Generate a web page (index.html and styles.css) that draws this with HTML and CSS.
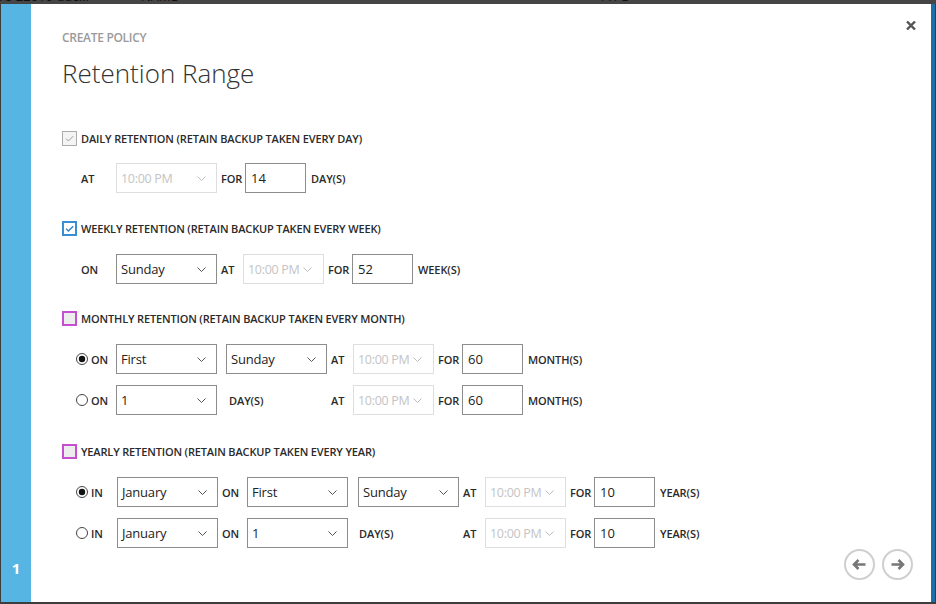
FILE: index.html
```html
<!DOCTYPE html>
<html lang="en">
<head>
<meta charset="utf-8">
<title>Create Policy - Retention Range</title>
<link rel="stylesheet" href="styles.css">
</head>
<body>
<div class="topbar">
  <span class="tb tb-1">re-22010-bac...</span>
  <span class="tb tb-2">NAME</span>
  <span class="tb tb-3">TYPE</span>
</div>
<div class="frame">
  <aside class="steps"><span class="step">1</span></aside>
  <main class="dialog">
    <button class="close" aria-label="Close">
      <svg width="10" height="9" viewBox="0 0 10 9"><path d="M1 0.5L9 8.5M9 0.5L1 8.5" stroke="#555" stroke-width="2.4" fill="none"/></svg>
    </button>
    <div class="kicker">CREATE POLICY</div>
    <h1 class="title">Retention Range</h1>

    <section class="sec sec-daily">
      <div class="head">
        <svg class="cb" viewBox="0 0 15 15"><rect x="0.5" y="0.5" width="14" height="14" fill="#f4f4f4" stroke="#ababab"/><path d="M4 7.6l2.4 2.4 4.8-4.8" fill="none" stroke="#9c9c9c" stroke-width="1"/></svg>
        <span>DAILY RETENTION (RETAIN BACKUP TAKEN EVERY DAY)</span>
      </div>
      <div class="row">
        <div class="lead"><span class="lbl">AT</span></div>
        <div class="sel dis"><span>10:00 PM</span><svg class="chev" viewBox="0 0 9 5"><path d="M0.5 0.5L4.5 4.5L8.5 0.5"/></svg></div>
        <span class="lbl l-for">FOR</span>
        <div class="inp">14</div>
        <span class="lbl unit">DAY(S)</span>
      </div>
    </section>

    <section class="sec sec-weekly">
      <div class="head">
        <svg class="cb" viewBox="0 0 15 15"><rect x="1" y="1" width="13" height="13" fill="#fff" stroke="#3b8ed2" stroke-width="2"/><path d="M4 7.6l2.4 2.4 4.8-4.8" fill="none" stroke="#2a7cc3" stroke-width="1.3"/></svg>
        <span>WEEKLY RETENTION (RETAIN BACKUP TAKEN EVERY WEEK)</span>
      </div>
      <div class="row">
        <div class="lead"><span class="lbl">ON</span></div>
        <div class="sel"><span>Sunday</span><svg class="chev" viewBox="0 0 9 5"><path d="M0.5 0.5L4.5 4.5L8.5 0.5"/></svg></div>
        <span class="lbl l-at">AT</span>
        <div class="sel sm dis"><span>10:00 PM</span><svg class="chev" viewBox="0 0 9 5"><path d="M0.5 0.5L4.5 4.5L8.5 0.5"/></svg></div>
        <span class="lbl l-for">FOR</span>
        <div class="inp">52</div>
        <span class="lbl unit">WEEK(S)</span>
      </div>
    </section>

    <section class="sec sec-monthly">
      <div class="head">
        <svg class="cb" viewBox="0 0 15 15"><rect x="1" y="1" width="13" height="13" fill="#ededed" stroke="#c64ed1" stroke-width="2"/></svg>
        <span>MONTHLY RETENTION (RETAIN BACKUP TAKEN EVERY MONTH)</span>
      </div>
      <div class="row">
        <div class="lead radio-lead">
          <svg class="radio" viewBox="0 0 12 12"><circle cx="6" cy="6" r="5.5" fill="#fff" stroke="#444"/><circle cx="6" cy="6" r="3.2" fill="#111"/></svg>
          <span class="lbl">ON</span>
        </div>
        <div class="sel"><span>First</span><svg class="chev" viewBox="0 0 9 5"><path d="M0.5 0.5L4.5 4.5L8.5 0.5"/></svg></div>
        <div class="sel gap9"><span>Sunday</span><svg class="chev" viewBox="0 0 9 5"><path d="M0.5 0.5L4.5 4.5L8.5 0.5"/></svg></div>
        <span class="lbl l-at">AT</span>
        <div class="sel sm dis"><span>10:00 PM</span><svg class="chev" viewBox="0 0 9 5"><path d="M0.5 0.5L4.5 4.5L8.5 0.5"/></svg></div>
        <span class="lbl l-for">FOR</span>
        <div class="inp">60</div>
        <span class="lbl unit">MONTH(S)</span>
      </div>
      <div class="row">
        <div class="lead radio-lead">
          <svg class="radio" viewBox="0 0 12 12"><circle cx="6" cy="6" r="5.5" fill="#fff" stroke="#444"/></svg>
          <span class="lbl">ON</span>
        </div>
        <div class="sel"><span>1</span><svg class="chev" viewBox="0 0 9 5"><path d="M0.5 0.5L4.5 4.5L8.5 0.5"/></svg></div>
        <span class="lbl l-days">DAY(S)</span>
        <span class="lbl l-at">AT</span>
        <div class="sel sm dis"><span>10:00 PM</span><svg class="chev" viewBox="0 0 9 5"><path d="M0.5 0.5L4.5 4.5L8.5 0.5"/></svg></div>
        <span class="lbl l-for">FOR</span>
        <div class="inp">60</div>
        <span class="lbl unit">MONTH(S)</span>
      </div>
    </section>

    <section class="sec sec-yearly">
      <div class="head">
        <svg class="cb" viewBox="0 0 15 15"><rect x="1" y="1" width="13" height="13" fill="#ededed" stroke="#c64ed1" stroke-width="2"/></svg>
        <span>YEARLY RETENTION (RETAIN BACKUP TAKEN EVERY YEAR)</span>
      </div>
      <div class="row">
        <div class="lead radio-lead wide">
          <svg class="radio" viewBox="0 0 12 12"><circle cx="6" cy="6" r="5.5" fill="#fff" stroke="#444"/><circle cx="6" cy="6" r="3.2" fill="#111"/></svg>
          <span class="lbl">IN</span>
        </div>
        <div class="sel"><span>January</span><svg class="chev" viewBox="0 0 9 5"><path d="M0.5 0.5L4.5 4.5L8.5 0.5"/></svg></div>
        <span class="lbl l-on">ON</span>
        <div class="sel"><span>First</span><svg class="chev" viewBox="0 0 9 5"><path d="M0.5 0.5L4.5 4.5L8.5 0.5"/></svg></div>
        <div class="sel gap10"><span>Sunday</span><svg class="chev" viewBox="0 0 9 5"><path d="M0.5 0.5L4.5 4.5L8.5 0.5"/></svg></div>
        <span class="lbl l-at">AT</span>
        <div class="sel sm dis"><span>10:00 PM</span><svg class="chev" viewBox="0 0 9 5"><path d="M0.5 0.5L4.5 4.5L8.5 0.5"/></svg></div>
        <span class="lbl l-for">FOR</span>
        <div class="inp">10</div>
        <span class="lbl unit">YEAR(S)</span>
      </div>
      <div class="row">
        <div class="lead radio-lead wide">
          <svg class="radio" viewBox="0 0 12 12"><circle cx="6" cy="6" r="5.5" fill="#fff" stroke="#444"/></svg>
          <span class="lbl">IN</span>
        </div>
        <div class="sel"><span>January</span><svg class="chev" viewBox="0 0 9 5"><path d="M0.5 0.5L4.5 4.5L8.5 0.5"/></svg></div>
        <span class="lbl l-on">ON</span>
        <div class="sel"><span>1</span><svg class="chev" viewBox="0 0 9 5"><path d="M0.5 0.5L4.5 4.5L8.5 0.5"/></svg></div>
        <span class="lbl l-days y">DAY(S)</span>
        <span class="lbl l-at">AT</span>
        <div class="sel sm dis"><span>10:00 PM</span><svg class="chev" viewBox="0 0 9 5"><path d="M0.5 0.5L4.5 4.5L8.5 0.5"/></svg></div>
        <span class="lbl l-for">FOR</span>
        <div class="inp">10</div>
        <span class="lbl unit">YEAR(S)</span>
      </div>
    </section>

    <nav class="nav">
      <button class="navbtn" aria-label="Back">
        <svg width="31" height="31" viewBox="0 0 31 31"><circle cx="15.5" cy="15.5" r="14.5" fill="#fff" stroke="#cfcfcf" stroke-width="2"/><path d="M21.5 15.5H10M14.5 11L10 15.5L14.5 20" fill="none" stroke="#777" stroke-width="2.6"/></svg>
      </button>
      <button class="navbtn" aria-label="Next">
        <svg width="31" height="31" viewBox="0 0 31 31"><circle cx="15.5" cy="15.5" r="14.5" fill="#fff" stroke="#cfcfcf" stroke-width="2"/><path d="M9.5 15.5H21M16.5 11L21 15.5L16.5 20" fill="none" stroke="#777" stroke-width="2.6"/></svg>
      </button>
    </nav>
  </main>
  <div class="edge"></div>
</div>
</body>
</html>
```

FILE: styles.css
```css
* { box-sizing: border-box; margin: 0; padding: 0; }
html, body { width: 936px; height: 604px; overflow: hidden; }
body {
  background: #3d3d3d;
  font-family: "Open Sans", "Noto Sans", sans-serif;
  color: #2a2a2a;
  display: flex;
  flex-direction: column;
}
.topbar {
  height: 4px;
  flex: none;
  overflow: hidden;
  display: flex;
  background: #454545;
}
.tb {
  font-size: 13px;
  line-height: 13px;
  margin-top: -10px;
  color: #111;
  white-space: nowrap;
}
.tb-1 { width: 142px; margin-left: -1px; }
.tb-2 { width: 458px; }
.frame {
  flex: 1;
  display: flex;
  padding: 0 1px 2px 1px;
}
.steps {
  width: 30px;
  background: #56b5e2;
  display: flex;
  flex-direction: column;
  justify-content: flex-end;
  align-items: center;
  padding-bottom: 25px;
}
.step {
  color: #fff;
  font-weight: 700;
  font-size: 15px;
  line-height: 18px;
}
.dialog {
  flex: 1;
  background: #fff;
  position: relative;
  display: flex;
  flex-direction: column;
  padding-left: 31px;
}
.edge { width: 4px; background: #1c70a8; }
.close {
  position: absolute;
  top: 17px;
  right: 15px;
  width: 10px;
  height: 9px;
  border: 0;
  background: none;
  display: flex;
}
.kicker {
  margin-top: 26px;
  font-size: 12px;
  line-height: 16px;
  font-weight: 600;
  color: #9a9a9a;
  letter-spacing: -0.3px;
}
.title {
  margin-top: 9px;
  font-size: 26px;
  line-height: 36px;
  font-weight: 300;
  color: #333;
}
.sec-daily { margin-top: 37px; }
.sec-weekly { margin-top: 25px; }
.sec-monthly { margin-top: 24px; }
.sec-yearly { margin-top: 26px; }
.head {
  height: 20px;
  display: flex;
  align-items: center;
  gap: 4px;
  font-size: 11px;
  font-weight: 600;
  color: #2a2a2a;
  letter-spacing: -0.15px;
}
.cb { width: 15px; height: 15px; flex: none; }
.row {
  height: 30px;
  margin-top: 11px;
  padding-left: 14px;
  display: flex;
  align-items: center;
}
.head + .row { margin-top: 16px; }
.sec-daily .head + .row { margin-top: 15px; }
.lbl {
  font-size: 11px;
  font-weight: 600;
  color: #2a2a2a;
  white-space: nowrap;
  flex: none;
  letter-spacing: -0.1px;
}
.lead {
  width: 40px;
  flex: none;
  display: flex;
  align-items: center;
  padding-left: 5px;
}
.radio-lead { padding-left: 0; }
.lead.wide { width: 41px; }
.radio { width: 12px; height: 12px; margin-right: 3px; flex: none; }
.sel {
  width: 101px;
  height: 30px;
  flex: none;
  border: 1px solid #8d8d8d;
  display: flex;
  align-items: center;
  justify-content: space-between;
  padding: 0 10px 0 4px;
  font-size: 13px;
  letter-spacing: -0.2px;
  color: #222;
  background: #fff;
  white-space: nowrap;
  overflow: hidden;
}
.sel.sm { width: 81px; padding-right: 11px; }
.sel.dis {
  border-color: #dedede;
  color: #c4c4c4;
  font-size: 12.5px;
  letter-spacing: -0.3px;
}
.chev { width: 9px; height: 5px; flex: none; fill: none; stroke: #555; stroke-width: 1; }
.dis .chev { stroke: #bdbdbd; }
.gap9 { margin-left: 9px; }
.gap10 { margin-left: 10px; }
.l-at { width: 26px; padding-left: 4px; }
.l-for { width: 28px; padding-left: 4px; }
.l-on { width: 29px; padding-left: 4px; }
.l-days { width: 110px; padding-left: 12px; }
.l-days.y { width: 111px; padding-left: 11px; }
.inp {
  width: 61px;
  height: 30px;
  flex: none;
  border: 1px solid #8d8d8d;
  display: flex;
  align-items: center;
  padding-left: 5px;
  font-size: 13px;
  color: #222;
}
.unit { margin-left: 5px; }
.nav {
  margin-top: auto;
  align-self: flex-end;
  margin-right: 18px;
  margin-bottom: 22px;
  display: flex;
  gap: 7px;
}
.navbtn {
  width: 31px;
  height: 31px;
  border: 0;
  background: none;
  display: flex;
}
```
